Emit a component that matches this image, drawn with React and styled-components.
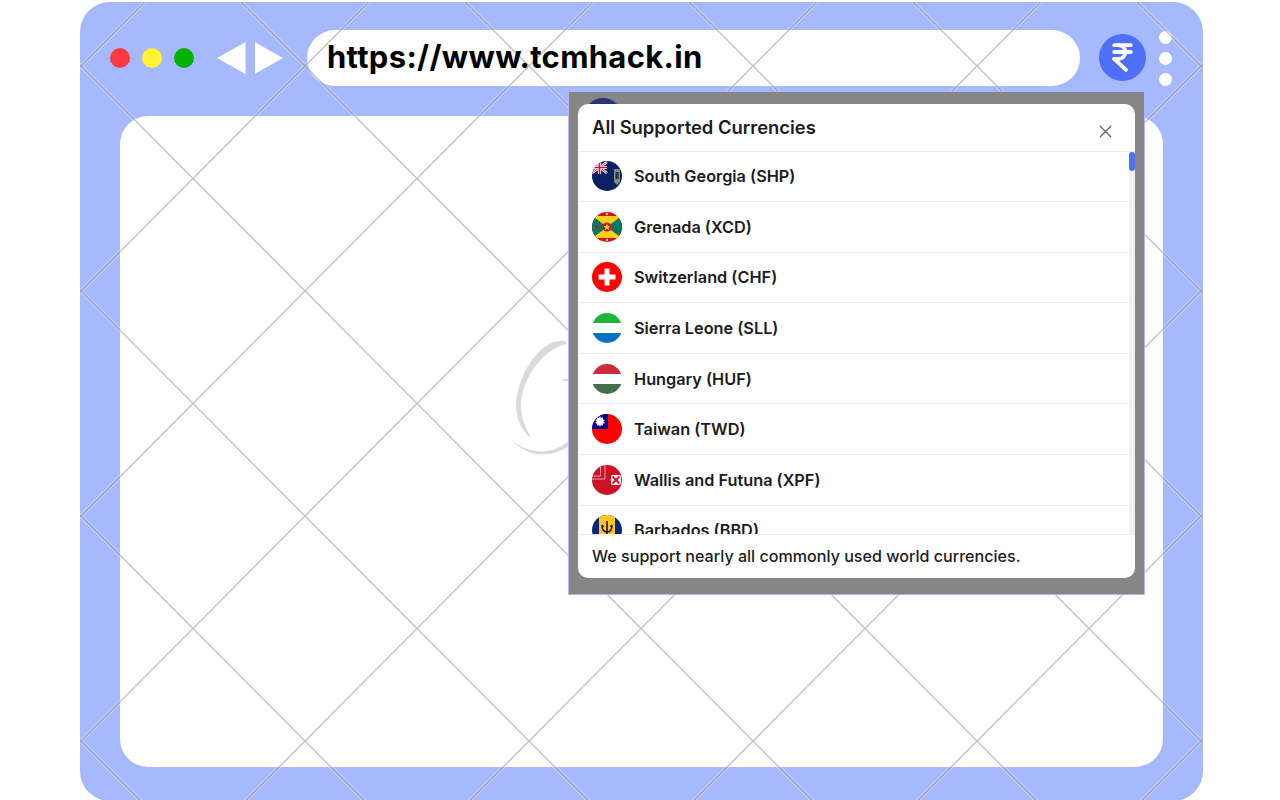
import styled, { createGlobalStyle } from "styled-components";
import { IndianRupee, X } from "lucide-react";

const currencies = [
    { flag: "gs", name: "South Georgia (SHP)" },
    { flag: "gd", name: "Grenada (XCD)" },
    { flag: "ch", name: "Switzerland (CHF)" },
    { flag: "sl", name: "Sierra Leone (SLL)" },
    { flag: "hu", name: "Hungary (HUF)" },
    { flag: "tw", name: "Taiwan (TWD)" },
    { flag: "wf", name: "Wallis and Futuna (XPF)" },
    { flag: "bb", name: "Barbados (BBD)" },
];

function FlagArt({ code }) {
    switch (code) {
        case "gs":
            return (
                <>
                    <rect width="30" height="30" fill="#0b1f63" />
                    <path d="M0 1 15 12M0 12 15 1" stroke="#fff" strokeWidth="2.4" />
                    <path d="M0 1 15 12M0 12 15 1" stroke="#c8102e" strokeWidth="0.8" />
                    <path d="M7.5 0V13M0 6.5H15" stroke="#fff" strokeWidth="3.2" />
                    <path d="M7.5 0V13M0 6.5H15" stroke="#c8102e" strokeWidth="1.6" />
                    <path d="M22 8h6v13l-3 3-3-3z" fill="#7d8a86" />
                    <path d="M23.500 11h3v7h-3z" fill="#2a3540" />
                </>
            );
        case "gd":
            return (
                <>
                    <rect width="30" height="30" fill="#ce1126" />
                    <path d="M0 4H30L15 15ZM0 26H30L15 15Z" fill="#fcd116" />
                    <path d="M0 4V26L15 15ZM30 4V26L15 15Z" fill="#007a5e" />
                    <circle cx="15" cy="15" r="4.600" fill="#ce1126" />
                    <path d="M15 11.500 16 14H18.500L16.500 15.700 17.200 18.300 15 16.800 12.800 18.300 13.500 15.700 11.500 14H14Z" fill="#fcd116" />
                    <circle cx="15" cy="2" r="1.200" fill="#fcd116" />
                    <circle cx="15" cy="28" r="1.200" fill="#fcd116" />
                    <path d="M3.500 13 7 15 3.500 17Z" fill="#ce1126" />
                </>
            );
        case "ch":
            return (
                <>
                    <rect width="30" height="30" fill="#ff0000" />
                    <path d="M12.500 6.500H17.500V12.500H23.500V17.500H17.500V23.500H12.500V17.500H6.500V12.500H12.500Z" fill="#fff" />
                </>
            );
        case "sl":
            return (
                <>
                    <rect width="30" height="10" fill="#1eb53a" />
                    <rect y="10" width="30" height="10" fill="#fff" />
                    <rect y="20" width="30" height="10" fill="#0072c6" />
                </>
            );
        case "hu":
            return (
                <>
                    <rect width="30" height="10" fill="#cd2a3e" />
                    <rect y="10" width="30" height="10" fill="#fff" />
                    <rect y="20" width="30" height="10" fill="#436f4d" />
                </>
            );
        case "tw":
            return (
                <>
                    <rect width="30" height="30" fill="#fe0000" />
                    <rect width="16" height="15" fill="#000095" />
                    <path d="M8 2 9 4.200 11 3 10.700 5.300 13 6 11.300 7.500 13 9 10.700 9.700 11 12 9 10.800 8 13 7 10.800 5 12 5.300 9.700 3 9 4.700 7.500 3 6 5.300 5.300 5 3 7 4.200Z" fill="#fff" />
                </>
            );
        case "wf":
            return (
                <>
                    <rect width="30" height="30" fill="#ce1126" />
                    <path d="M8.500 0V11H0" fill="none" stroke="#f2c5c9" strokeWidth="0.8" />
                    <path d="M13 0V14H0" fill="none" stroke="#f2c5c9" strokeWidth="0.8" />
                    <rect x="19" y="10" width="10" height="10" rx="2" fill="#fff" />
                    <path d="M20.500 11.500 27.500 18.500M27.500 11.500 20.500 18.500" stroke="#ce1126" strokeWidth="1.800" />
                </>
            );
        default:
            return (
                <>
                    <rect width="30" height="30" fill="#00267f" />
                    <rect x="7" width="16" height="30" fill="#ffc726" />
                    <path d="M15 6V23M10 10C10 15 12 17 15 17S20 15 20 10M10 10 11.500 12M20 10 18.500 12M12 20H18" fill="none" stroke="#111" strokeWidth="1.500" />
                </>
            );
    }
}

function App() {
    return (
        <>
            <GlobalStyle />
            <Page>
                <BrowserFrame>
                    <Toolbar>
                        <TrafficLights>
                            <Light color="#ff3b41" />
                            <Light color="#fff333" />
                            <Light color="#00b000" />
                        </TrafficLights>
                        <NavArrows>
                            <Arrow direction="left" />
                            <Arrow direction="right" />
                        </NavArrows>
                        <AddressBar>
                            <AddressText>https://www.tcmhack.in</AddressText>
                        </AddressBar>
                        <RupeeBadge>
                            <IndianRupee size={33} strokeWidth={2.8} color="#fff" />
                        </RupeeBadge>
                        <MenuDots>
                            <span />
                            <span />
                            <span />
                        </MenuDots>
                    </Toolbar>
                    <Content>
                        <Watermark viewBox="510 335 60 130">
                            <path d="M565 341C541 337 517 375 516 405 516 420 523 432 531 438 525 427 520 415 521 403 523 376 545 348 567 344Z" />
                            <path d="M511 439C525 452 548 458 569 441V446C548 460 525 456 511 439Z" />
                            <path d="M563 379H569V381H563Z" />
                        </Watermark>
                    </Content>
                    <GridLines aria-hidden="true">
                        <defs>
                            <pattern id="diamonds" width="224" height="225" patternUnits="userSpaceOnUse" patternTransform="translate(1 64)">
                                <path className="halo" d="M0 0 224 225M224 0 0 225" />
                                <path className="line" d="M0 0 224 225M224 0 0 225" />
                            </pattern>
                        </defs>
                        <rect width="100%" height="100%" fill="url(#diamonds)" />
                    </GridLines>
                    <ModalShot>
                        <PeekAvatar />
                        <Dialog>
                            <DialogHeader>
                                <DialogTitle>All Supported Currencies</DialogTitle>
                                <CloseButton>
                                    <X size={21} strokeWidth={1.4} />
                                </CloseButton>
                            </DialogHeader>
                            <ScrollArea>
                                <CurrencyList>
                                    {currencies.map((item) => (
                                        <CurrencyRow key={item.flag}>
                                            <Flag viewBox="0 0 30 30">
                                                <FlagArt code={item.flag} />
                                            </Flag>
                                            <CurrencyName>{item.name}</CurrencyName>
                                        </CurrencyRow>
                                    ))}
                                </CurrencyList>
                                <ScrollTrack>
                                    <ScrollThumb />
                                </ScrollTrack>
                            </ScrollArea>
                            <DialogFooter>We support nearly all commonly used world currencies.</DialogFooter>
                        </Dialog>
                    </ModalShot>
                </BrowserFrame>
            </Page>
        </>
    );
}

const GlobalStyle = createGlobalStyle`
    html, body {
        margin: 0;
        padding: 0;
        height: 800px;
        overflow: hidden;
        background: #fff;
    }
`

const Page = styled.div`
    box-sizing: border-box;
    width: 1280px;
    height: 800px;
    padding: 2px 0 0 80px;
    overflow: hidden;
`

const BrowserFrame = styled.div`
    position: relative;
    width: 1123px;
    height: 799px;
    background: #a6b9ff;
    border-radius: 30px;
    overflow: hidden;
`

const Toolbar = styled.div`
    box-sizing: border-box;
    display: flex;
    align-items: center;
    height: 114px;
    padding: 0 0 2px 30px;
`

const TrafficLights = styled.div`
    display: flex;
    gap: 12px;
`

const Light = styled.span`
    width: 20px;
    height: 20px;
    border-radius: 50%;
    background: ${(props) => props.color};
`

const NavArrows = styled.div`
    display: flex;
    gap: 9px;
    margin-left: 23px;
`

const Arrow = styled.span`
    width: 28.5px;
    height: 32px;
    background: #fff;
    clip-path: ${(props) => (props.direction === "left"
        ? "polygon(0 50%, 100% 0, 100% 100%)"
        : "polygon(0 0, 100% 50%, 0 100%)")};
`

const AddressBar = styled.div`
    box-sizing: border-box;
    width: 773px;
    height: 56px;
    margin-left: 24px;
    padding: 0 20px 3px;
    display: flex;
    align-items: center;
    background: #fff;
    border-radius: 28px;
`

const AddressText = styled.span`
    position: relative;
    z-index: 1;
    font-family: Inter, sans-serif;
    font-weight: 700;
    font-size: 31px;
    letter-spacing: 0.32px;
    color: #000;
`

const RupeeBadge = styled.div`
    width: 47px;
    height: 47px;
    margin: -2px 0 0 19px;
    display: flex;
    align-items: center;
    justify-content: center;
    background: #4f6ff9;
    border-radius: 50%;
`

const MenuDots = styled.div`
    display: flex;
    flex-direction: column;
    gap: 8px;
    margin-left: 13px;

    span {
        width: 13px;
        height: 13px;
        background: #fff;
        border-radius: 50%;
    }
`

const Content = styled.div`
    position: relative;
    width: 1043px;
    height: 651px;
    margin-left: 40px;
    background: #fff;
    border-radius: 28px;
`

const Watermark = styled.svg`
    position: absolute;
    left: 390px;
    top: 219px;
    width: 60px;
    height: 130px;
    fill: #dadada;
    filter: blur(0.5px);
`

const GridLines = styled.svg`
    position: absolute;
    inset: 0;
    width: 100%;
    height: 100%;
    pointer-events: none;

    path {
        fill: none;
    }

    .halo {
        stroke: rgba(255, 255, 255, 0.3);
        stroke-width: 3.5;
    }

    .line {
        stroke: rgba(85, 85, 85, 0.34);
        stroke-width: 1.5;
    }
`

const ModalShot = styled.div`
    position: absolute;
    left: 488px;
    top: 89px;
    box-sizing: border-box;
    display: flex;
    width: 577px;
    height: 504px;
    padding: 12px 9px 16px;
    background: #868686;
    border: 1px solid #a9bbff;
`

const PeekAvatar = styled.span`
    position: absolute;
    left: 15px;
    top: 6px;
    width: 38px;
    height: 38px;
    background: #2a3472;
    border-radius: 50%;
`

const Dialog = styled.div`
    position: relative;
    flex: 1;
    display: flex;
    flex-direction: column;
    background: #fff;
    border-radius: 10px;
    overflow: hidden;
    font-family: Inter, sans-serif;
    color: #1c1c1e;
`

const DialogHeader = styled.div`
    box-sizing: border-box;
    flex: none;
    display: flex;
    align-items: center;
    justify-content: space-between;
    height: 47.5px;
    padding: 0 19px 0 14px;
    border-bottom: 1px solid #eeeeee;
`

const DialogTitle = styled.h2`
    margin: 0;
    font-size: 18.4px;
    font-weight: 600;
`

const CloseButton = styled.span`
    display: flex;
    margin-top: 9px;
    color: #666;
`

const ScrollArea = styled.div`
    flex: 1;
    min-height: 0;
    display: flex;
`

const CurrencyList = styled.div`
    flex: 1;
    overflow: hidden;
`

const CurrencyRow = styled.div`
    box-sizing: border-box;
    display: flex;
    align-items: center;
    gap: 12px;
    height: 50.6px;
    padding-left: 14px;
    border-bottom: 1px solid #eeeeee;
`

const Flag = styled.svg`
    flex: none;
    width: 30px;
    height: 30px;
    border-radius: 50%;
`

const CurrencyName = styled.span`
    font-size: 16.3px;
    font-weight: 600;
`

const ScrollTrack = styled.div`
    flex: none;
    width: 6px;
    background: #f1f1f1;
`

const ScrollThumb = styled.div`
    height: 19px;
    background: #4f6ff9;
    border-radius: 3px;
`

const DialogFooter = styled.div`
    box-sizing: border-box;
    flex: none;
    display: flex;
    align-items: center;
    height: 44px;
    padding: 0 0 2px 14px;
    border-top: 1px solid #eeeeee;
    font-size: 16.1px;
    font-weight: 500;
`

export default App;
